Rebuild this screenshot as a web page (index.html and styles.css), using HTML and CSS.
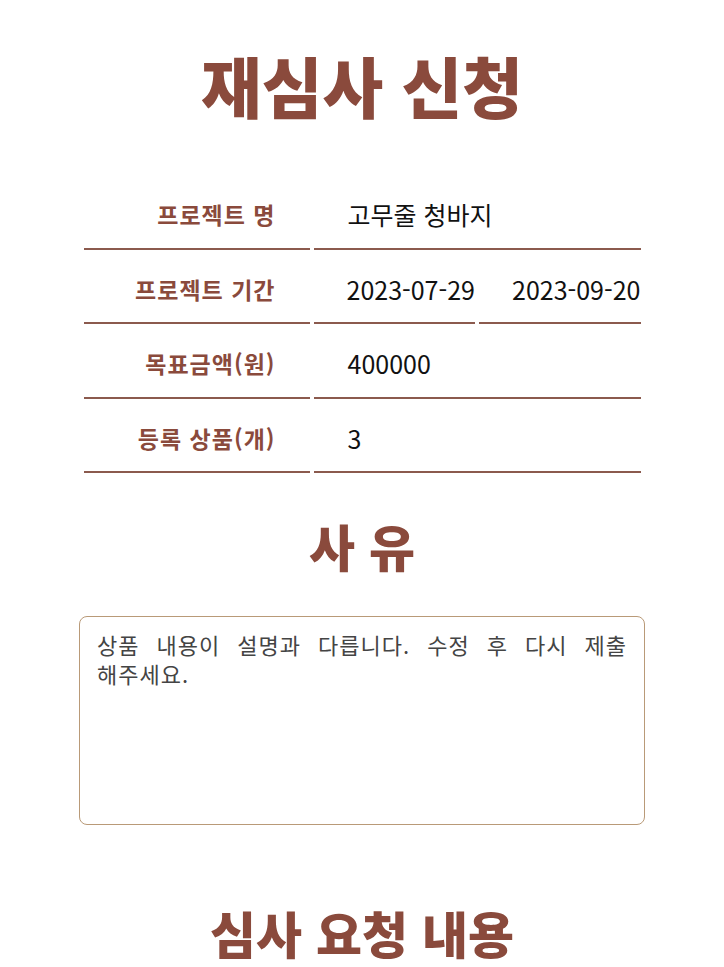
FILE: index.html
```html
<!DOCTYPE html>
<html lang="ko">
<head>
<meta charset="utf-8">
<link rel="stylesheet" href="styles.css">
</head>
<body>
<main class="page">
  <h1 class="title">재심사 신청</h1>
  <section class="info">
    <div class="row">
      <div class="label">프로젝트 명</div>
      <div class="value">고무줄 청바지</div>
    </div>
    <div class="row">
      <div class="label">프로젝트 기간</div>
      <div class="value split">
        <div class="half">2023-07-29</div>
        <div class="half">2023-09-20</div>
      </div>
    </div>
    <div class="row">
      <div class="label">목표금액(원)</div>
      <div class="value">400000</div>
    </div>
    <div class="row">
      <div class="label">등록 상품(개)</div>
      <div class="value">3</div>
    </div>
  </section>
  <h2 class="heading reason-heading">사 유</h2>
  <div class="reason-box">상품 내용이 설명과 다릅니다. 수정 후 다시 제출해주세요.</div>
  <h2 class="heading request-heading">심사 요청 내용</h2>
</main>
</body>
</html>
```
FILE: styles.css
```css
html, body {
  margin: 0;
  padding: 0;
  background: #ffffff;
}
body {
  font-family: "Noto Sans CJK KR", "Noto Sans", sans-serif;
  color: #111;
}
.page {
  display: flex;
  flex-direction: column;
  align-items: center;
}
.title {
  margin: 42px 0 0;
  font-size: 66px;
  font-weight: 900;
  line-height: 84px;
  color: #8a4a3c;
}
.info {
  width: 557px;
  margin-top: 49px;
  display: flex;
  flex-direction: column;
}
.row {
  display: grid;
  grid-template-columns: 226px 1fr;
  column-gap: 4px;
  height: 74.5px;
}
.label, .half, .value {
  display: flex;
  align-items: center;
  padding-top: 6px;
  box-sizing: border-box;
  border-bottom: 2px solid #8b5a4e;
}
.label {
  justify-content: flex-end;
  padding-right: 34px;
  font-size: 23px;
  letter-spacing: 1px;
  font-weight: 700;
  color: #8a4a3c;
}
.value {
  padding-left: 34px;
  font-size: 25px;
  font-weight: 400;
  color: #111;
}
.value.split {
  padding: 0;
  border-bottom: none;
  display: grid;
  grid-template-columns: 1fr 1fr;
  column-gap: 4px;
  align-items: stretch;
}
.half {
  padding-left: 33px;
}
.heading {
  margin: 0;
  font-weight: 900;
  color: #8a4a3c;
  font-size: 50px;
  line-height: 64px;
}
.reason-heading {
  margin-top: 40px;
}
.reason-box {
  margin-top: 39px;
  width: 566px;
  height: 209px;
  box-sizing: border-box;
  border: 1.5px solid #b99a78;
  border-radius: 8px;
  padding: 13px 17px;
  font-size: 22px;
  letter-spacing: 1px;
  word-spacing: 8.5px;
  line-height: 29px;
  color: #444;
  text-align: justify;
}
.request-heading {
  margin-top: 75px;
}
```
